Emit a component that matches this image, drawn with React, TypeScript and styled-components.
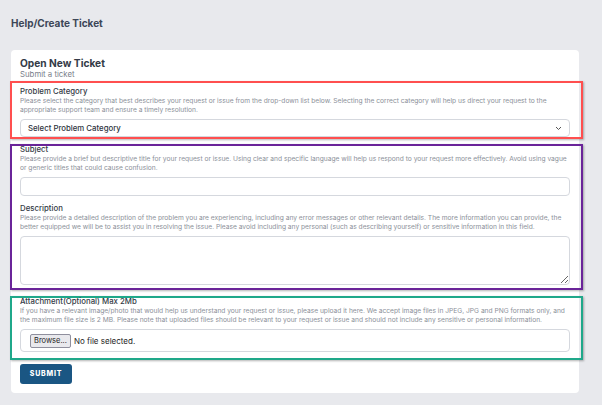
import styled, { createGlobalStyle } from "styled-components";

const Global = createGlobalStyle`
  body {
    margin: 0;
    background: #e8e9ed;
    font-family: Inter, "Noto Sans", sans-serif;
  }
`;

const Page = styled.div`
  padding: 15px 23px 13px 11px;
`;

const PageTitle = styled.h1`
  margin: 0 0 19px;
  font-size: 10px;
  line-height: 16px;
  font-weight: 700;
  color: #3c4657;
`;

const Card = styled.div`
  background: #fff;
  border-radius: 4px;
  padding: 7px 0 9px 9px;
`;

const CardTitle = styled.h2`
  margin: 0;
  font-size: 10.2px;
  line-height: 13px;
  font-weight: 700;
  color: #343b47;
`;

const CardSub = styled.div`
  font-size: 7.8px;
  line-height: 9px;
  color: #7a808a;
  margin-bottom: 2px;
`;

const Field = styled.div`
  display: flex;
  flex-direction: column;
  & + & {
    margin-top: 6.5px;
  }
`;

const Section = styled.div<{ $color: string; $offset: number; $bottom: number; $gap: number }>`
  margin: ${(p) => p.$gap}px -4px 0 -10px;
  border: 2px solid ${(p) => p.$color};
  box-shadow: 1px 1px 2px rgba(0, 0, 0, 0.3);
  padding: 0 11px ${(p) => p.$bottom}px 8px;
  display: flex;
  flex-direction: column;
  & > ${Field}:first-child {
    margin-top: ${(p) => p.$offset}px;
  }
`;

const Label = styled.label`
  font-size: 7.8px;
  line-height: 11px;
  font-weight: 500;
  color: #333a45;
`;

const Help = styled.p`
  margin: 0 0 4.5px;
  font-size: 6.65px;
  line-height: 9px;
  color: #8b9099;
`;

const SelectBox = styled.div`
  height: 18px;
  border: 1px solid #d5d8de;
  border-radius: 4px;
  box-sizing: border-box;
  display: flex;
  align-items: center;
  justify-content: space-between;
  padding: 0 7px 0 7px;
  font-size: 7.8px;
  font-weight: 500;
  color: #2d333d;
`;

const Input = styled.input`
  height: 19px;
  border: 1px solid #d5d8de;
  border-radius: 4px;
  box-sizing: border-box;
  outline: none;
`;

const TextArea = styled.textarea`
  height: 49px;
  border: 1px solid #d5d8de;
  border-radius: 4px;
  box-sizing: border-box;
  outline: none;
  resize: vertical;
`;

const FileBox = styled.div`
  height: 23px;
  border: 1px solid #d5d8de;
  border-radius: 4px;
  box-sizing: border-box;
  display: flex;
  align-items: center;
  padding: 0 9px;
  gap: 3px;
  font-size: 8px;
  color: #1e1e1e;
`;

const Browse = styled.button`
  font-family: Inter, "Noto Sans", sans-serif;
  font-size: 7.5px;
  height: 14px;
  padding: 0 3px;
  border: 1px solid #8f8f9d;
  border-radius: 2px;
  background: #e9e9ed;
  color: #1e1e1e;
`;

const Submit = styled.button`
  margin-top: 3px;
  width: 52px;
  height: 20px;
  border: none;
  border-radius: 3px;
  background: #1a5683;
  color: #fff;
  font-family: Inter, "Noto Sans", sans-serif;
  font-size: 7px;
  font-weight: 800;
  letter-spacing: 0.8px;
`;

const Chevron = () => (
  <svg width="7" height="5" viewBox="0 0 7 5" fill="none">
    <path d="M1 1l2.5 2.5L6 1" stroke="#555" strokeWidth="1" />
  </svg>
);

export default function App() {
  return (
    <>
      <Global />
      <Page>
        <PageTitle>Help/Create Ticket</PageTitle>
        <Card>
          <CardTitle>Open New Ticket</CardTitle>
          <CardSub>Submit a ticket</CardSub>

          <Section $color="#ff4f4f" $offset={2.5} $bottom={0} $gap={0}>
            <Field>
              <Label>Problem Category</Label>
              <Help>
                Please select the category that best describes your request or issue from the drop-down list below.
                Selecting the correct category will help us direct your request to the appropriate support team and
                ensure a timely resolution.
              </Help>
              <SelectBox>
                <span>Select Problem Category</span>
                <Chevron />
              </SelectBox>
            </Field>
          </Section>

          <Section $color="#6a2499" $offset={-2.5} $bottom={2.5} $gap={5}>
            <Field>
              <Label>Subject</Label>
              <Help>
                Please provide a brief but descriptive title for your request or issue. Using clear and specific
                language will help us respond to your request more effectively. Avoid using vague or generic titles
                that could cause confusion.
              </Help>
              <Input />
            </Field>
            <Field>
              <Label>Description</Label>
              <Help>
                Please provide a detailed description of the problem you are experiencing, including any error
                messages or other relevant details. The more information you can provide, the better equipped we will
                be to assist you in resolving the issue. Please avoid including any personal (such as describing
                yourself) or sensitive information in this field.
              </Help>
              <TextArea />
            </Field>
          </Section>

          <Section $color="#1fa88a" $offset={-2.5} $bottom={6} $gap={6.5}>
            <Field>
              <Label>Attachment(Optional) Max 2Mb</Label>
              <Help>
                If you have a relevant image/photo that would help us understand your request or issue, please upload
                it here. We accept image files in JPEG, JPG and PNG formats only, and the maximum file size is 2 MB.
                Please note that uploaded files should be relevant to your request or issue and should not include
                any sensitive or personal information.
              </Help>
              <FileBox>
                <Browse>Browse...</Browse>
                <span>No file selected.</span>
              </FileBox>
            </Field>
          </Section>

          <Submit>SUBMIT</Submit>
        </Card>
      </Page>
    </>
  );
}
